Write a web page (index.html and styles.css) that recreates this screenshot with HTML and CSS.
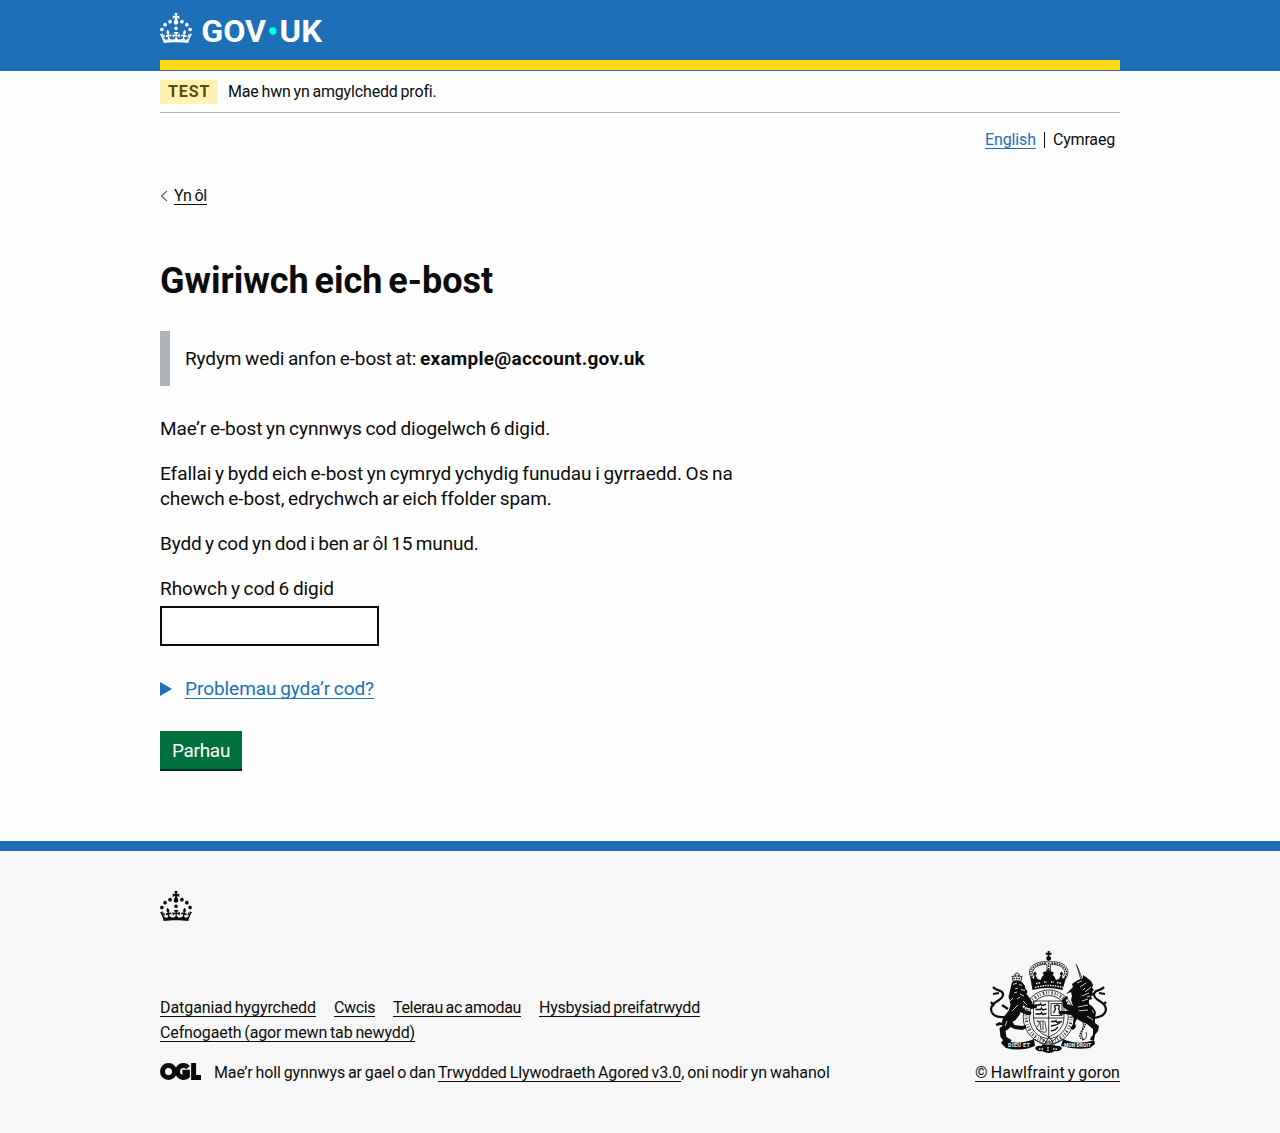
FILE: index.html
```html
<!DOCTYPE html>
<html lang="cy">
<head>
<meta charset="utf-8">
<title>Gwiriwch eich e-bost - GOV.UK</title>
<link rel="stylesheet" href="styles.css">
</head>
<body>
<svg class="symbols" aria-hidden="true">
  <symbol id="crown" viewBox="0 0 32 30"><path fill-rule="evenodd" d="M22.6 10.4c-1 .4-2-.1-2.4-1-.4-.9.1-2 1-2.4.9-.4 2 .1 2.4 1s-.1 2-1 2.4m-5.9 6.7c-.9.4-2-.1-2.4-1-.4-.9.1-2 1-2.4.9-.4 2 .1 2.4 1s-.1 2-1 2.4m10.8-3.7c-1 .4-2-.1-2.4-1-.4-.9.1-2 1-2.4.9-.4 2 .1 2.4 1s0 2-1 2.4m3.3 4.8c-1 .4-2-.1-2.4-1-.4-.9.1-2 1-2.4.9-.4 2 .1 2.4 1s-.1 2-1 2.4M17 4.7l2.3 1.2V2.5l-2.3.7-.2-.2.9-3h-3.4l.9 3-.2.2c-.1.1-2.3-.7-2.3-.7v3.4L15 4.7c.1.1.1.2.2.2l-1.3 4c-.1.2-.1.4-.1.6 0 1.1.8 2 1.9 2.2h.7c1-.2 1.9-1.1 1.9-2.1 0-.2 0-.4-.1-.6l-1.3-4c-.1-.2 0-.2.1-.3m-7.6 5.7c.9.4 2-.1 2.4-1 .4-.9-.1-2-1-2.4-.9-.4-2 .1-2.4 1s0 2 1 2.4m-5 3c.9.4 2-.1 2.4-1 .4-.9-.1-2-1-2.4-.9-.4-2 .1-2.4 1s.1 2 1 2.4m-3.2 4.8c.9.4 2-.1 2.4-1 .4-.9-.1-2-1-2.4-.9-.4-2 .1-2.4 1s0 2 1 2.4m14.8 11c4.4 0 8.6.3 12.3.8 1.1-4.5 2.4-7 3.7-8.8l-2.5-.9c.2 1.3.3 1.9 0 2.7-.4-.4-.8-1.1-1.1-2.3l-1.2 4c.7-.5 1.3-.8 2-.9-1.1 2.5-2.6 3.1-3.5 3-1.1-.2-1.7-1.2-1.5-2.1.3-1.2 1.5-1.5 2.1-.1 1.1-2.3-.8-3-2-2.3 1.9-1.9 2.1-3.5.6-5.6-2.1 1.6-2.1 3.2-1.2 5.5-1.2-1.4-3.2-.6-2.5 1.6.9-1.4 2.1-.5 1.9.8-.2 1.1-1.7 2.1-3.5 1.9-2.7-.2-2.9-2.1-2.9-3.6.7-.1 1.9.5 2.9 1.9l.4-4.3c-1.1 1.1-2.1 1.4-3.2 1.4.4-1.2 2.1-3 2.1-3h-5.4s1.7 1.9 2.1 3c-1.1 0-2.1-.2-3.2-1.4l.4 4.3c1-1.4 2.2-2 2.9-1.9-.1 1.5-.2 3.4-2.9 3.6-1.9.2-3.4-.8-3.5-1.9-.2-1.3 1-2.2 1.9-.8.7-2.3-1.2-3-2.5-1.6.9-2.2.9-3.9-1.2-5.5-1.5 2-1.3 3.7.6 5.6-1.2-.7-3.1 0-2 2.3.6-1.4 1.8-1.1 2.1.1.2.9-.3 1.9-1.5 2.1-.9.2-2.4-.5-3.5-3 .6 0 1.2.3 2 .9l-1.2-4c-.3 1.1-.7 1.9-1.1 2.3-.3-.8-.2-1.4 0-2.7l-2.9.9C1.3 23 2.6 25.5 3.7 30c3.7-.5 7.9-.8 12.3-.8"/></symbol>
</svg>

<header class="header">
  <div class="container header-inner">
    <a class="logo" href="#" aria-label="GOV.UK">
      <svg class="crown"><use href="#crown"/></svg>
      <svg class="wordmark" viewBox="0 0 122 40">
        <text x="-.8" y="29" textLength="65" lengthAdjust="spacingAndGlyphs">GOV</text>
        <circle cx="70.8" cy="18" r="3.7"/>
        <text x="77.600" y="29" textLength="42.5" lengthAdjust="spacingAndGlyphs">UK</text>
      </svg>
    </a>
  </div>
</header>

<div class="container">
  <div class="phase">
    <strong class="tag">TEST</strong>
    <span class="phase-text">Mae hwn yn amgylchedd profi.</span>
  </div>
  <nav class="languages">
    <a class="link en" href="#">English</a>
    <span class="cy">Cymraeg</span>
  </nav>
  <a class="back" href="#">
    <svg viewBox="0 0 8 12"><path d="M7 .8 1.5 6 7 11.2"/></svg>
    <span>Yn ôl</span>
  </a>

  <main class="main">
    <h1>Gwiriwch eich e-bost</h1>
    <div class="inset"><span class="sent">Rydym wedi anfon e-bost at: </span><strong>example@account.gov.uk</strong></div>
    <p>Mae’r e-bost yn cynnwys cod diogelwch 6 digid.</p>
    <p>Efallai y bydd eich e-bost yn cymryd ychydig funudau i gyrraedd. Os na <span class="second">chewch e-bost, edrychwch ar eich ffolder spam.</span></p>
    <p class="expiry">Bydd y cod yn dod i ben ar ôl 15 munud.</p>
    <label for="code">Rhowch y cod 6 digid</label>
    <input id="code" type="text">
    <a class="details" href="#">
      <svg viewBox="0 0 12 14"><path d="M0 0 12 7 0 14z"/></svg>
      <span>Problemau gyda’r cod?</span>
    </a>
    <button type="button">Parhau</button>
  </main>
</div>

<footer class="footer">
  <div class="container">
    <svg class="crown footer-crown"><use href="#crown"/></svg>
    <div class="footer-row">
      <div class="footer-meta">
        <nav class="footer-links">
          <a class="f1" href="#">Datganiad hygyrchedd</a>
          <a class="f2" href="#">Cwcis</a>
          <a class="f3" href="#">Telerau ac amodau</a>
          <a class="f4" href="#">Hysbysiad preifatrwydd</a>
          <a class="f5" href="#">Cefnogaeth (agor mewn tab newydd)</a>
        </nav>
        <div class="licence">
          <svg class="ogl" viewBox="0 0 41 17">
            <circle cx="8.5" cy="8.5" r="6"/>
            <path d="M28 4.6A6 6 0 1 0 27.4 13V9.3H22.4M33.6 0V14.5H41"/>
          </svg>
          <span class="licence-text">Mae’r holl gynnwys ar gael o dan <a href="#">Trwydded Llywodraeth Agored v3.0</a><span class="tail">, oni nodir yn wahanol</span></span>
        </div>
      </div>
      <a class="copyright" href="#">
        <svg class="arms" viewBox="0 0 117 102">
          <!-- crown -->
          <path d="M57.6 0h2.2l-.4 2 2-.5v2.4l-2-.5.3 2.2h-2.2l.3-2.2-2 .5V1.5l2 .5z"/>
          <circle cx="58.7" cy="7.500" r="2.4"/>
          <path class="l1" d="M42 28C34 17 46 9 58.7 11 72 9 83 17 75.400 28M44 25C39 18 49 12.500 57 13.500V24M73.400 25C78 18 69 12.500 60.400 13.500V24"/>
          <path class="dots" d="M42.500 26C37 18 47 11.500 57 12.300M75 26C80 18 71 11.500 60.400 12.300M58.700 12V24"/>
          <path d="M40 25l4 3 .5-4-1.500-1 2-2.500 2 2.500-1.500 1 2 4 3 1 2-4 1.500-1-1.500-2 2-1.500h2.500l-.5-2h3.500l-.5 2h2.500l2 1.500-1.500 2 1.500 1 2 4 3-1 2-4-1.500-1 2-2.500 2 2.500-1.500 1 .5 4 4-3-4 14q-15-4-30 0z"/>
          <path class="w dots" d="M45 36.500q14-4 28 0M46 32.500l5-1M54 31h3M61 31h3M67 31.500l5 1"/>
          <!-- garter and shield -->
          <ellipse class="l1" cx="58.700" cy="66" rx="25.500" ry="27"/>
          <ellipse class="l1" cx="58.700" cy="66" rx="19.500" ry="21.500"/>
          <ellipse class="garter" cx="58.700" cy="66" rx="22.500" ry="24.300"/>
          <path class="l1" d="M43.500 50H74V67Q74 80 58.700 86 43.500 80 43.500 67zM58.700 50V86M43.500 67H74"/>
          <path class="l2" d="M45.500 54h4l1-1.500 1 2 4.500-1M45.500 58.500h5l1-1.500 1 2 4-1M45.500 63h5l1-1.500 1 2 4-1M61 80l4-1 3-3M61 75l5-1 4-2M61 70.500h4l1-1 1 2 5-1"/>
          <path class="l1" d="M61 52.500H72V64.500H61z"/>
          <path class="l2" d="M63.500 62l2-4-1-3 3-1 2 1-1 3 2 3"/>
          <path class="l1" d="M47 70c4 0 2 4 0 6s3 4 6 5 4-1 3-4 0-7-3-7-4 1-6 0M50 71l1 8M53 71v8"/>
          <!-- lion -->
          <path class="l1" d="M23 30l-1-5 2 1 1-3 2-1 2 1 1 3 2-1-1 5z"/>
          <path class="dots" d="M23.500 27.500h8M25 25h5"/>
          <path d="M22 31q5-3 10 0l3 4 .5 3 2 2-1 3 4 5 2 5 5 1-1 3-5 1-6-2-2-2-1 2 3 3 6 2-1 3-4 0-6-3-1 3-4 5-3 2 2 3 8 1 3-1 1 3-4 2-8-1-4-2-2 2-3 2 1 6 5 3-1 3-6-1-4-5-1-9 3-2-1-1-5 1-1-2 4-2 2 1 2-6 5-6 2-6-1-5-1-3z"/>
          <path class="l3" d="M14 66C4 67-1 61 2 55 4 50 14 49 13 43 12 38 7 41 3 36M9 42l-6 1M4 55l-3-4M18 58l-6-4"/>
          <path class="w l1" d="M23 33.500l4-1.500M29 33.500l3 1M25 38l3-1M31 38.500l4 1M24 42l3-1M30 43l4 2M27 48l3-2M22 60l6-6M17 70l-2 5M33 50l4 4M20 50l3-3"/>
          <!-- unicorn -->
          <path class="l1" d="M86 13 93 29M87 15 91 29"/>
          <path d="M83 36l-1-3 6-4 5-2 0-3 3 2 5 4 2 4-1 3 2 2-2 2 2 3-3 1 1 3-3 1 0 4 4 3 3 5-1 6 0 5 4 3-1 5-3 4-1 5-4 0 1-3 2-2 0-6-6-5-5-2-5-3-2 4 1 4-3 3-3-2 3-3 1-7-3-3-6-1-5 1-2-3 2-1 9 0-6-4-1-7 3-3 2-1 1 2-2 2 1 4 6 2-2-6 1-4-1-4-5 2z"/>
          <path class="l3" d="M104 67C113 66 118 61 115 55 113 50 103 49 104 43 105 38 110 41 114 36M109 42l6 1M113 54l3-3"/>
          <path class="w l1" d="M87 32l5-2M90 36l6-4M95 41l6-5M92 45l7-3M88 56l10-2M97 65l6 4M92 50l6-2M88 60l10-1M93 39l2-2M97 46l3-1M102 59l2 3"/>
          <path class="dots" d="M84 46C82 62 102 66 93 78S98 88 92 89"/>
          <path class="l1" d="M92 69C96 75 90 80 92 86S98 86 96 81"/>
          <!-- ribbon -->
          <path d="M13 89q14 6 31-1l1 7q-14 6-29 2l-5-5zM73 88q15 7 31 1l1 4-5 4q-15 2-29-2zM45 97q2-3 6-2 2-3 7-1 5-2 8 1 4-1 6 2-2 4-7 3-6 4-13 0-5 1-7-3z"/>
          <path class="l1" d="M44 88l10 6 5-8 5 7 9-5M50 86l6 5M68 85l-6 6M56 91h5"/>
          <path class="w dots" d="M49 98h5M58 96v4M63 98h5"/>
          <text x="18" y="96" textLength="22">DIEU ET</text>
          <text x="74" y="96" textLength="27" lengthAdjust="spacingAndGlyphs">MON DROIT</text>
        </svg>
        <span>© Hawlfraint y goron</span>
      </a>
    </div>
  </div>
</footer>
</body>
</html>
```
FILE: styles.css
```css
* { box-sizing: border-box; }
body {
  margin: 0;
  min-height: 1133px;
  display: flex;
  flex-direction: column;
  background: #fefefe;
  color: #0b0c0c;
  font: 19px/25px Roboto, "Liberation Sans", sans-serif;
  word-spacing: -1px;
}
a { color: inherit; text-decoration: underline; text-decoration-thickness: 1px; text-underline-offset: 3px; text-decoration-skip-ink: none; }
.symbols { display: none; }
.container { width: 960px; margin: 0 auto; }
.crown { width: 32px; height: 30px; fill: currentColor; display: block; }

.header { height: 71px; background: #1d70b8; color: #fff; }
.header-inner { height: 70px; border-bottom: 10px solid #ffd912; padding-top: 13px; }
.logo { display: flex; gap: 10px; }
.wordmark { width: 122px; height: 40px; overflow: visible; font: 700 31px Roboto, sans-serif; fill: #fff; }
.wordmark circle { fill: #00ffe0; }

.phase { display: flex; align-items: center; gap: 11px; height: 42px; border-bottom: 1px solid #b1b4b6; font-size: 16px; }
.tag { width: 57px; height: 24px; padding-left: 8px; background: #fff2b3; color: #594d00; line-height: 24px; letter-spacing: .95px; }
.phase-text { letter-spacing: -.16px; line-height: 20px; }
.languages { display: flex; justify-content: flex-end; padding: 17px 5px 0 0; font-size: 16px; line-height: 20px; }
.link { color: #1d70b8; }
.en { letter-spacing: -.109px; margin-right: 8px; }
.cy { letter-spacing: -.185px; position: relative; padding-left: 9px; }
.cy::before { content: ""; position: absolute; left: 0; top: 2px; width: 1px; height: 16px; background: #0b0c0c; }
.back { display: inline-flex; align-items: center; gap: 6px; margin-top: 36px; font-size: 16px; line-height: 20px; letter-spacing: -.22px; text-decoration: none; }
.back span { text-decoration: underline; text-underline-offset: 3px; }
.back svg { width: 8px; height: 12px; fill: none; stroke: #505a5f; stroke-width: 1.1; }

.main { width: 630px; padding-top: 53px; display: flex; flex-direction: column; align-items: flex-start; }
h1 { margin: 0 0 30px; font-size: 36px; line-height: 40px; word-spacing: -3px; }
.inset { border-left: 10px solid #b1b4b6; padding: 15px; height: 55px; margin-bottom: 30px; }
.sent { letter-spacing: -.107px; }
.inset strong { letter-spacing: .251px; }
p { margin: 0 0 20px; width: 590px; letter-spacing: -.053px; }
.second { letter-spacing: -.085px; }
.expiry { letter-spacing: -.155px; }
label { letter-spacing: -.055px; margin-bottom: 5px; }
input { width: 219px; height: 40px; border: 2px solid #0b0c0c; background: #fff; font: inherit; padding: 5px; }
.details { display: flex; align-items: center; gap: 13px; margin: 30px 0; color: #1d70b8; text-decoration: none; letter-spacing: -.048px; }
.details svg { width: 12px; height: 14px; fill: #1d70b8; }
.details span { text-decoration: underline; text-underline-offset: 3px; }
button { width: 82px; height: 40px; padding: 1px 0 0; border: 0; border-bottom: 2px solid #002d18; background: #00703c; color: #fff; font: 19px/37px Roboto, sans-serif; letter-spacing: -.3px; }

.footer { flex: 1; margin-top: 70px; padding-top: 40px; border-top: 10px solid #1d70b8; background: #f7f7f8; font-size: 16px; }
.footer-row { display: flex; justify-content: space-between; align-items: flex-end; margin-top: 30px; }
.footer-meta { width: 700px; }
.footer-links { display: flex; flex-wrap: wrap; column-gap: 18px; width: 620px; margin-bottom: 15px; line-height: 25px; }
.f1 { letter-spacing: -.07px; }
.f2 { letter-spacing: -.39px; }
.f3 { letter-spacing: -.335px; }
.f4 { letter-spacing: -.22px; }
.f5 { letter-spacing: -.12px; }
.licence { display: flex; align-items: center; gap: 13px; }
.ogl { width: 41px; height: 17px; margin-bottom: 2px; fill: none; stroke: #0b0c0c; stroke-width: 5; }
.licence-text { letter-spacing: -.1px; }
.tail { letter-spacing: -.05px; }
.copyright { display: flex; flex-direction: column; align-items: flex-end; letter-spacing: .06px; text-decoration: none; }
.copyright span { margin-top: 7px; text-decoration: underline; text-underline-offset: 3px; }
.arms { width: 117px; height: 102px; margin-right: 13px; fill: #0b0c0c; overflow: visible; }
.arms .l1, .arms .l2, .arms .l3, .arms .dots, .arms .garter { fill: none; stroke: #0b0c0c; stroke-width: .8; }
.arms .l2 { stroke-width: 1.3; }
.arms .l3 { stroke-width: 2.2; }
.arms .dots { stroke-width: 1.4; stroke-dasharray: 1.5 1; }
.arms .garter { stroke-width: 3.2; stroke-dasharray: 1 1.6 .7 2.3 1.5 1.8; stroke-opacity: .75; }
.arms .w { stroke: #f7f7f8; }
.arms text { fill: #f7f7f8; font: 700 5.5px Roboto, sans-serif; word-spacing: 0; }
```
